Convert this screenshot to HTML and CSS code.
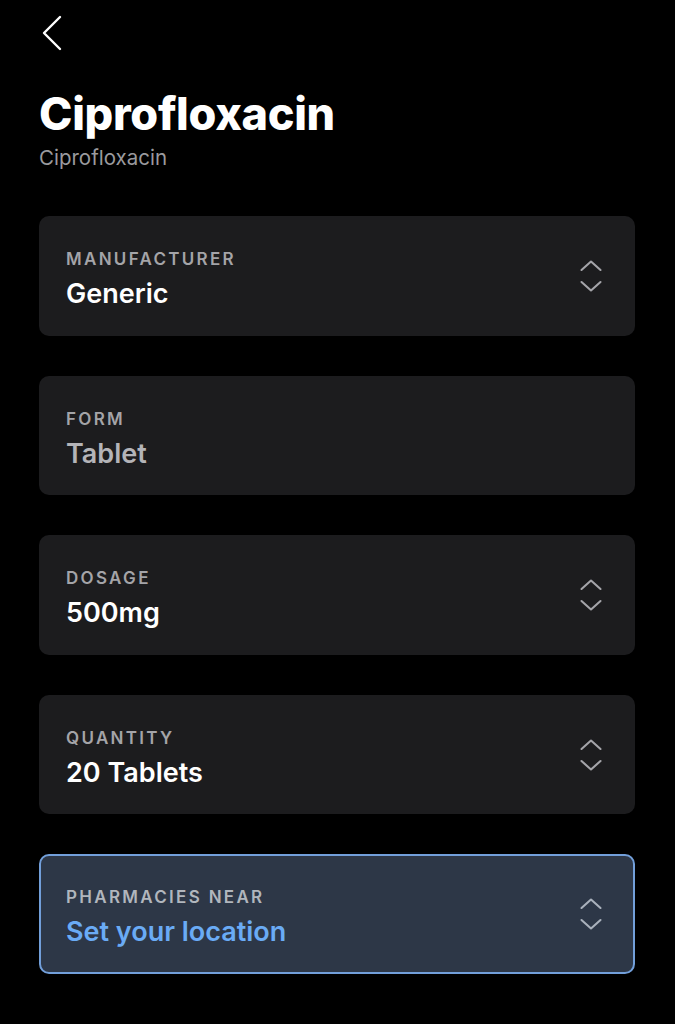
FILE: index.html
```html
<!DOCTYPE html>
<html>
<head>
<meta charset="utf-8">
<link rel="stylesheet" href="styles.css">
</head>
<body>
<div class="page">
  <button class="back" aria-label="Back">
    <svg width="22" height="36" viewBox="0 0 22 36"><path d="M19 2 L3 18 L19 34" fill="none" stroke="#fff" stroke-width="2.4" stroke-linecap="round" stroke-linejoin="round"/></svg>
  </button>
  <h1 class="title">Ciprofloxacin</h1>
  <div class="subtitle">Ciprofloxacin</div>
  <div class="cards">
    <div class="card">
      <div class="text"><div class="label">MANUFACTURER</div><div class="value">Generic</div></div>
      <svg class="chev" width="24" height="34" viewBox="0 0 24 34"><path d="M2.5 11 L12 2.5 L21.5 11 M2.5 23 L12 31.5 L21.5 23" fill="none" stroke="#a4a4a9" stroke-width="2.1" stroke-linecap="round" stroke-linejoin="round"/></svg>
    </div>
    <div class="card">
      <div class="text"><div class="label">FORM</div><div class="value muted">Tablet</div></div>
    </div>
    <div class="card">
      <div class="text"><div class="label">DOSAGE</div><div class="value">500mg</div></div>
      <svg class="chev" width="24" height="34" viewBox="0 0 24 34"><path d="M2.5 11 L12 2.5 L21.5 11 M2.5 23 L12 31.5 L21.5 23" fill="none" stroke="#a4a4a9" stroke-width="2.1" stroke-linecap="round" stroke-linejoin="round"/></svg>
    </div>
    <div class="card">
      <div class="text"><div class="label">QUANTITY</div><div class="value">20 Tablets</div></div>
      <svg class="chev" width="24" height="34" viewBox="0 0 24 34"><path d="M2.5 11 L12 2.5 L21.5 11 M2.5 23 L12 31.5 L21.5 23" fill="none" stroke="#a4a4a9" stroke-width="2.1" stroke-linecap="round" stroke-linejoin="round"/></svg>
    </div>
    <div class="card active">
      <div class="text"><div class="label">PHARMACIES NEAR</div><div class="value link">Set your location</div></div>
      <svg class="chev" width="24" height="34" viewBox="0 0 24 34"><path d="M2.5 11 L12 2.5 L21.5 11 M2.5 23 L12 31.5 L21.5 23" fill="none" stroke="#a9b1bc" stroke-width="2.1" stroke-linecap="round" stroke-linejoin="round"/></svg>
    </div>
  </div>
</div>
</body>
</html>
```

FILE: styles.css
```css
html, body {
  margin: 0;
  padding: 0;
  background: #000;
}
body {
  font-family: Inter, "Noto Sans", sans-serif;
  color: #fff;
}
.page {
  padding: 15px 40px 40px 39px;
}
.back {
  display: block;
  background: none;
  border: 0;
  padding: 0;
  margin: 0 0 0 2px;
  width: 22px;
  height: 36px;
}
.back svg { display: block; }
.title {
  margin: 38px 0 0 0;
  font-size: 45px;
  line-height: 50px;
  font-weight: 800;
  letter-spacing: -0.3px;
}
.subtitle {
  margin-top: 7px;
  font-size: 20.5px;
  line-height: 24px;
  color: #9a9a9e;
}
.cards {
  margin-top: 46px;
  display: flex;
  flex-direction: column;
  gap: 40px;
}
.card {
  box-sizing: border-box;
  height: 119.5px;
  background: #1c1c1e;
  border-radius: 10px;
  padding: 33px 32.5px 26px 27px;
  display: flex;
  align-items: flex-start;
  justify-content: space-between;
}
.card.active {
  background: #2d3747;
  border: 2px solid #729fda;
  padding: 31px 30.5px 24px 25px;
}
.label {
  font-size: 17px;
  line-height: 20px;
  font-weight: 600;
  letter-spacing: 2.3px;
  color: #a4a4a8;
}
.value {
  margin-top: 9px;
  font-size: 27px;
  line-height: 32px;
  font-weight: 600;
  color: #fff;
}
.value.muted { color: #b4b4b8; }
.value.link { color: #6aabf5; }
.active .label { color: #b1b6bd; }
.chev {
  display: block;
  align-self: center;
  margin-top: -6px;
}
```
